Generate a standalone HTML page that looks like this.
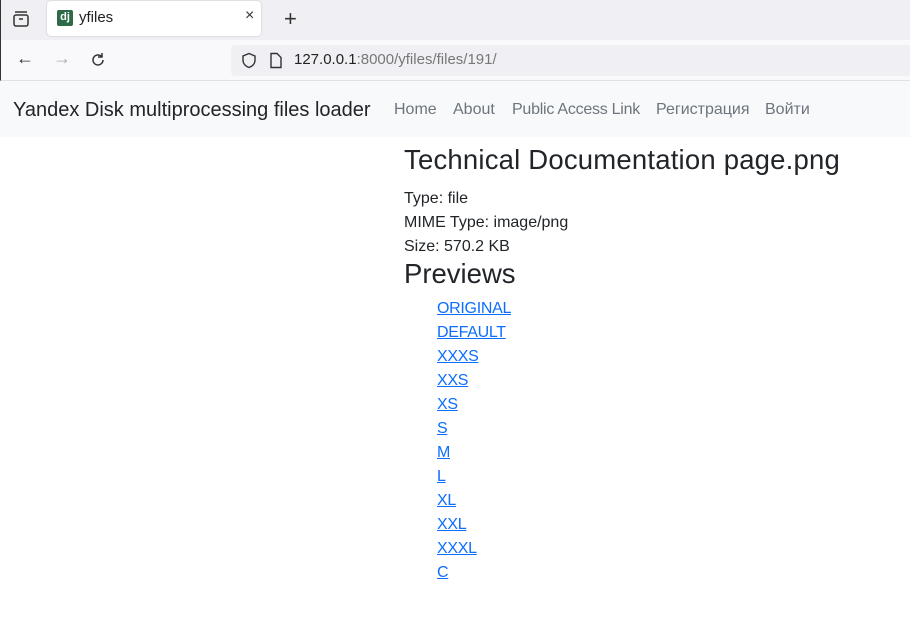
<!DOCTYPE html>
<html><head><meta charset="utf-8"><style>
*{margin:0;padding:0;box-sizing:border-box}
body{width:910px;height:619px;overflow:hidden;background:#fff;font-family:"Liberation Sans",sans-serif;position:relative}
.tabbar{position:absolute;left:0;top:0;width:910px;height:40px;background:#f0f0f4;border-left:1px solid #333}
.tab{position:absolute;left:46px;top:1px;width:214px;height:35px;background:#fff;border-radius:4px;box-shadow:0 0 2px rgba(0,0,0,.2)}
.urlbar{position:absolute;left:0;top:40px;width:910px;height:41px;background:#f9f9fb;border-bottom:1px solid #e0e0e6;border-left:1px solid #333}
.url{position:absolute;left:230px;top:5px;width:680px;height:31px;background:#f0f0f4;border-radius:4px}
.nav{position:absolute;left:0;top:81px;width:910px;height:56px;background:#f8f9fa}
.brand{position:absolute;left:13px;top:99px;font-size:20px;color:#212529}
.nl{position:absolute;top:101px;font-size:16px;color:#6c757d}
.c{position:absolute;left:404px;color:#212529}
a{color:#0d6efd;font-size:16px;position:absolute;left:437px;letter-spacing:-0.3px}
</style></head><body>
<div class="tabbar">
<svg style="position:absolute;left:11px;top:10px" width="18" height="18" viewBox="0 0 18 18" fill="none" stroke="#333" stroke-width="1.5"><rect x="2" y="5" width="14" height="11" rx="2"/><path d="M3 2h12M7 9h4"/></svg>
<div class="tab">
<div style="position:absolute;left:10px;top:9px;width:16px;height:16px;background:#2d6a47;border-radius:2px;color:#fff;font-size:11px;font-weight:bold;line-height:15px;text-align:center">dj</div>
<span style="position:absolute;left:32px;top:8px;font-size:15px;color:#222">yfiles</span>
<span style="position:absolute;left:198px;top:6px;font-size:16px;color:#333">×</span>
</div>
<span style="position:absolute;left:283px;top:6px;font-size:22px;color:#333">+</span>
</div>
<div class="urlbar">
<span style="position:absolute;left:15px;top:8px;font-size:18px;color:#333">←</span>
<span style="position:absolute;left:52px;top:8px;font-size:18px;color:#aaa">→</span>
<svg style="position:absolute;left:88px;top:11px" width="18" height="18" viewBox="0 0 18 18" fill="none" stroke="#333" stroke-width="1.5"><path d="M14 9a5 5 0 1 1-1.5-3.6"/><path d="M13 2v4h-4"/></svg>
<div class="url">
<svg style="position:absolute;left:10px;top:7px" width="16" height="17" viewBox="0 0 16 17" fill="none" stroke="#333" stroke-width="1.4"><path d="M8 1.5L2 4v4c0 4 3 6.5 6 7.5 3-1 6-3.5 6-7.5V4z"/></svg>
<svg style="position:absolute;left:38px;top:7px" width="14" height="17" viewBox="0 0 14 17" fill="none" stroke="#333" stroke-width="1.4"><path d="M2 1.5h6l4 4v10H2z"/></svg>
<span style="position:absolute;left:63px;top:6px;font-size:15px;color:#222">127.0.0.1<span style="color:#777">:8000/yfiles/files/191/</span></span>
</div>
</div>
<div class="nav"></div>
<div class="brand">Yandex Disk multiprocessing files loader</div>
<span class="nl" style="left:394px">Home</span>
<span class="nl" style="left:453px">About</span>
<span class="nl" style="left:512px;letter-spacing:-0.25px">Public Access Link</span>
<span class="nl" style="left:656px">Регистрация</span>
<span class="nl" style="left:765px">Войти</span>
<div class="c" style="top:144px;font-size:27.5px;letter-spacing:0.2px">Technical Documentation page.png</div>
<div class="c" style="top:187px;font-size:16px;line-height:24px">Type: file<br>MIME Type: image/png<br>Size: 570.2 KB</div>
<div class="c" style="top:258px;font-size:27.5px">Previews</div>
<a style="top:300px" href="#">ORIGINAL</a>
<a style="top:324px" href="#">DEFAULT</a>
<a style="top:348px" href="#">XXXS</a>
<a style="top:372px" href="#">XXS</a>
<a style="top:396px" href="#">XS</a>
<a style="top:420px" href="#">S</a>
<a style="top:444px" href="#">M</a>
<a style="top:468px" href="#">L</a>
<a style="top:492px" href="#">XL</a>
<a style="top:516px" href="#">XXL</a>
<a style="top:540px" href="#">XXXL</a>
<a style="top:564px" href="#">C</a>
</body></html>
